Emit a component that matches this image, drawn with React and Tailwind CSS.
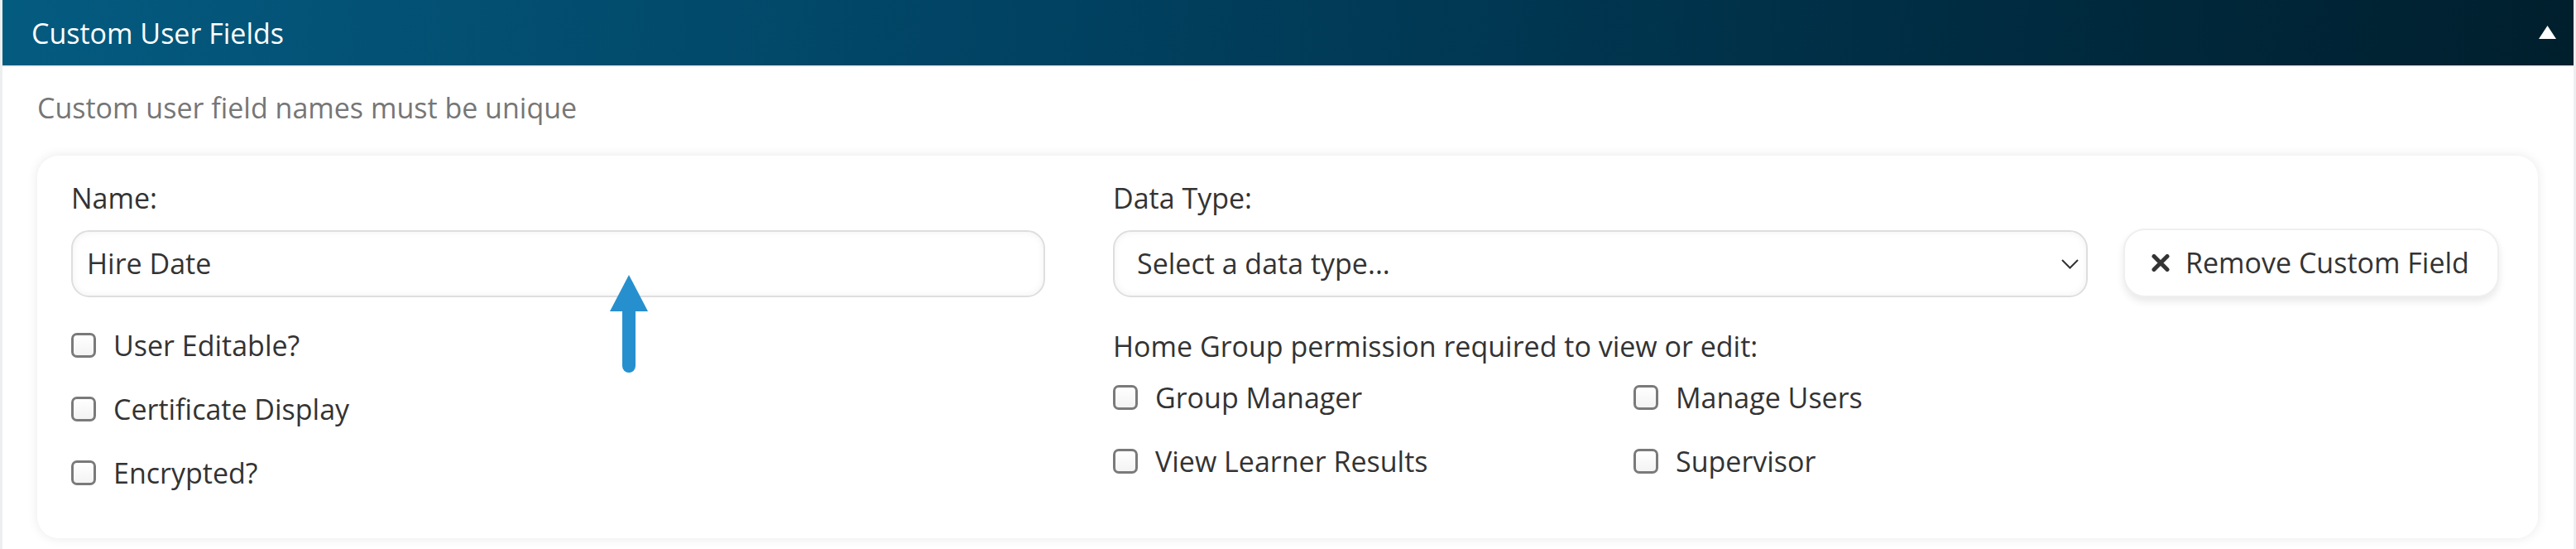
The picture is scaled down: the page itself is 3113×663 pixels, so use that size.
import React from 'react';

const font = { fontFamily: '"Open Sans", "Noto Sans", Arial, sans-serif' };

function Box() {
  return (
    <span className="block h-[30px] w-[30px] shrink-0 rounded-[7px] border-[3px] border-[#7a7a7a] bg-[linear-gradient(180deg,#ffffff,#f3f3f3)]" />
  );
}

function Check({ label }) {
  return (
    <label className="flex h-[44px] items-center gap-[21px] text-[34px] leading-[44px] text-[#333]">
      <Box />
      <span>{label}</span>
    </label>
  );
}

export default function App() {
  return (
    <div className="h-[663px] w-[3113px] overflow-hidden bg-[#eceef0]" style={font}>
      <div className="mx-[3px] h-full bg-white">
        <div className="flex h-[79px] items-center justify-between bg-[linear-gradient(96deg,#045b80_0%,#014262_40%,#002b40_78%,#001f2d_100%)] pl-[35px] pr-[21px]">
          <h2 className="text-[34px] leading-[44px] text-white">Custom User Fields</h2>
          <svg width="21" height="16" viewBox="0 0 21 16" className="mb-[1px]">
            <polygon points="10.5,0 21,16 0,16" fill="#fff" />
          </svg>
        </div>
        <div className="h-[2px] bg-[#eceef0]" />

        <div className="px-[42px] pt-[27px]">
          <p className="text-[34px] leading-[44px] text-[#767676]">Custom user field names must be unique</p>

          <div className="relative mr-[1px] mt-[36px] flex h-[462px] rounded-[26px] bg-white pl-[41px] pt-[29px] shadow-[0_0_14px_rgba(0,0,0,0.09)]">
            {/* left column */}
            <div className="flex w-[1177px] flex-col">
              <div className="text-[34px] leading-[44px] text-[#333]">Name:</div>
              <div className="mt-[17px] flex h-[81px] items-center rounded-[22px] border-2 border-[#dedede] bg-white pl-[17px] text-[34px] text-[#333] shadow-[inset_0_0_10px_rgba(0,0,0,0.06)]">
                Hire Date
              </div>
              <div className="mt-[36px] flex flex-col gap-[33px]">
                <Check label="User Editable?" />
                <Check label="Certificate Display" />
                <Check label="Encrypted?" />
              </div>
            </div>

            {/* middle column */}
            <div className="ml-[82px] flex w-[1178px] flex-col">
              <div className="text-[34px] leading-[44px] text-[#333]">Data Type:</div>
              <div className="mt-[17px] flex h-[81px] items-center justify-between rounded-[22px] border-2 border-[#dedede] bg-white pl-[27px] pr-[9px] text-[34px] text-[#333] shadow-[inset_0_0_10px_rgba(0,0,0,0.06)]">
                <span>Select a data type...</span>
                <svg width="21" height="12" viewBox="0 0 21 12" fill="none">
                  <path d="M1 1l9.5 9.5L20 1" stroke="#333" strokeWidth="2" />
                </svg>
              </div>
              <div className="mt-[37px] text-[34px] leading-[44px] text-[#333]">Home Group permission required to view or edit:</div>
              <div className="mt-[18px] grid grid-cols-[629px_1fr] gap-y-[33px]">
                <Check label="Group Manager" />
                <Check label="Manage Users" />
                <Check label="View Learner Results" />
                <Check label="Supervisor" />
              </div>
            </div>

            {/* button column */}
            <div className="ml-[43px] pt-[59px]">
              <button
                type="button"
                className="flex h-[83px] w-[454px] items-center gap-[19px] rounded-[26px] border-2 border-[#efefef] bg-white pl-[32px] text-[34px] text-[#333] shadow-[0_5px_10px_rgba(0,0,0,0.09)]"
              >
                <svg width="22" height="21" viewBox="0 0 22 21">
                  <path d="M3 2.5l16 16M19 2.5l-16 16" stroke="#333" strokeWidth="5" strokeLinecap="round" />
                </svg>
                Remove Custom Field
              </button>
            </div>

            {/* annotation arrow */}
            <svg className="absolute left-[692px] top-[144px]" width="46" height="119" viewBox="0 0 46 119">
              <line x1="23" y1="40" x2="23" y2="110" stroke="#2690cf" strokeWidth="16" strokeLinecap="round" />
              <polygon points="23,0 46,44 0,44" fill="#2690cf" />
            </svg>
          </div>
        </div>
      </div>
    </div>
  );
}
